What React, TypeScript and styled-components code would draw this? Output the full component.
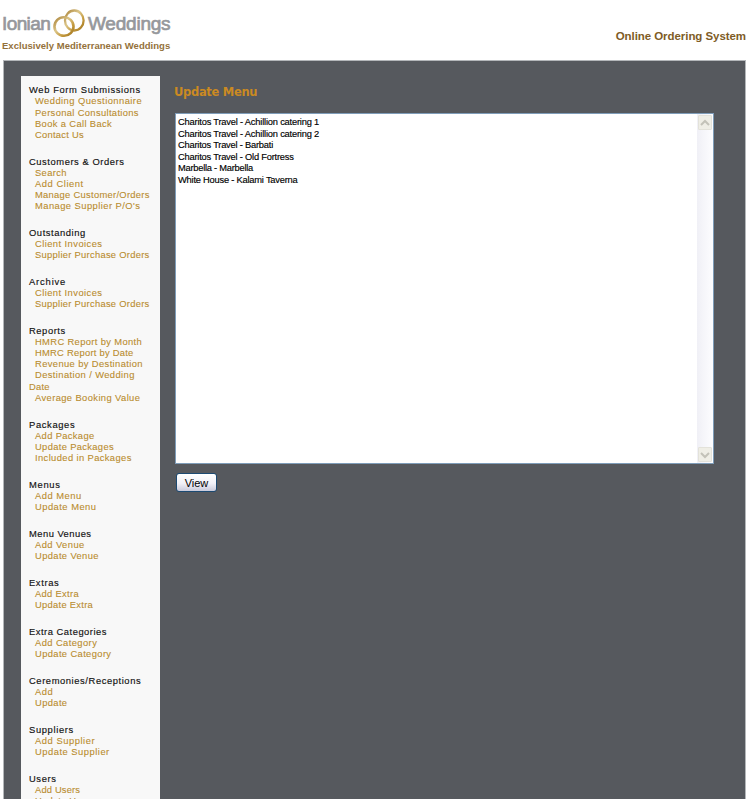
import React from "react";
import styled, { createGlobalStyle } from "styled-components";

const GlobalStyle = createGlobalStyle`
  * { box-sizing: border-box; }
  body { margin: 0; background: #fff; overflow: hidden; font-family: "Liberation Sans", Arial, sans-serif; }
`;

const Page = styled.div`
  width: 750px;
  height: 799px;
  padding: 0 4px 0 3px;
  overflow: hidden;
  display: flex;
  flex-direction: column;
`;

const Header = styled.header`
  height: 60px;
  flex: none;
  display: flex;
  justify-content: space-between;
`;

const Brand = styled.div`
  padding-top: 9px;
  white-space: nowrap;
`;

const Logo = styled.div`
  height: 30px;
  margin-left: -1px;
  display: flex;
  align-items: flex-start;
`;

const LogoWord = styled.span<{ $width: number; $track: number }>`
  width: ${(p) => p.$width}px;
  font-size: 19px;
  line-height: 30px;
  color: #96989c;
  -webkit-text-stroke: 0.7px #96989c;
  letter-spacing: ${(p) => p.$track}px;
`;

const Rings = styled.svg`
  width: 32px;
  height: 30px;
  margin: 0 3px 0 2px;
  flex: none;
`;

const Tagline = styled.div`
  margin-left: -1px;
  font-size: 9.5px;
  line-height: 13px;
  font-weight: bold;
  color: #94713a;
  letter-spacing: 0.03px;
`;

const SystemName = styled.div`
  padding-top: 29px;
  font-size: 11.5px;
  line-height: 14px;
  font-weight: bold;
  color: #7e5c26;
  letter-spacing: -0.06px;
  white-space: nowrap;
`;

const Body = styled.div`
  flex: 1;
  min-height: 0;
  display: flex;
  align-items: flex-start;
  padding: 15px 0 0 17px;
  background: #56595e;
  border: 1px solid #b4b7ba;
  border-bottom: 0;
`;

const Sidebar = styled.nav`
  width: 139px;
  height: 760px;
  flex: none;
  padding: 8.4px 0 0 8px;
  background: #f8f8f8;
`;

const Group = styled.section`
  margin-bottom: 15.8px;
  font-size: 9.4px;
  line-height: 11.1px;
  white-space: nowrap;
`;

const GroupTitle = styled.div<{ $track: number }>`
  color: #111;
  letter-spacing: ${(p) => p.$track}px;
  -webkit-text-stroke: 0.15px #111;
`;

const NavLink = styled.div<{ $track: number; $flush?: boolean }>`
  color: #b88c2e;
  -webkit-text-stroke: 0.1px #b88c2e;
  padding-left: ${(p) => (p.$flush ? 0 : 6)}px;
  letter-spacing: ${(p) => p.$track}px;
`;

const Content = styled.main`
  margin-left: 15px;
  padding-top: 8px;
`;

const Title = styled.h1`
  margin: 0 0 0 -1px;
  height: 29px;
  font-family: "DejaVu Sans", Verdana, sans-serif;
  font-size: 11.5px;
  line-height: 16px;
  font-weight: bold;
  color: #cb8a22;
  letter-spacing: -0.3px;
`;

const ListBox = styled.div`
  width: 539px;
  height: 351px;
  display: flex;
  justify-content: space-between;
  background: #fff;
  border: 1px solid #7f9db9;
`;

const Options = styled.div`
  padding: 3px 0 0 2px;
  white-space: nowrap;
`;

const Option = styled.div<{ $track: number }>`
  font-size: 9.3px;
  line-height: 11.6px;
  color: #000;
  -webkit-text-stroke: 0.15px #000;
  letter-spacing: ${(p) => p.$track}px;
`;

const Scrollbar = styled.div`
  width: 16px;
  display: flex;
  flex-direction: column;
  justify-content: space-between;
  padding: 1px;
  background: linear-gradient(90deg, #f0f0f6, #fdfdff);
`;

const ScrollButton = styled.div`
  width: 14px;
  height: 15px;
  display: flex;
  align-items: center;
  justify-content: center;
  background: #efeee6;
  border: 1px solid #e3e2da;
  border-radius: 1px;
`;

const ViewButton = styled.button`
  display: block;
  margin: 9px 0 0 1px;
  width: 41px;
  height: 19px;
  padding: 0;
  font-family: "Liberation Sans", Arial, sans-serif;
  font-size: 11px;
  line-height: 16px;
  color: #000;
  border: 1px solid #1c4a72;
  border-radius: 3px;
  background: linear-gradient(#fff 0%, #f1f1f8 55%, #c9cadb 100%);
`;

type Item = [text: string, track: number, flush?: boolean];

const groups: { title: Item; links: Item[] }[] = [
  { title: ["Web Form Submissions", 0.62], links: [["Wedding Questionnaire", 0.44], ["Personal Consultations", 0.34], ["Book a Call Back", 0.36], ["Contact Us", 0.25]] },
  { title: ["Customers & Orders", 0.56], links: [["Search", 0.37], ["Add Client", 0.55], ["Manage Customer/Orders", 0.29], ["Manage Supplier P/O's", 0.44]] },
  { title: ["Outstanding", 0.56], links: [["Client Invoices", 0.43], ["Supplier Purchase Orders", 0.28]] },
  { title: ["Archive", 0.84], links: [["Client Invoices", 0.43], ["Supplier Purchase Orders", 0.28]] },
  { title: ["Reports", 0.56], links: [["HMRC Report by Month", 0.35], ["HMRC Report by Date", 0.25], ["Revenue by Destination", 0.38], ["Destination / Wedding", 0.39], ["Date", 0.2, true], ["Average Booking Value", 0.39]] },
  { title: ["Packages", 0.64], links: [["Add Package", 0.34], ["Update Packages", 0.33], ["Included in Packages", 0.38]] },
  { title: ["Menus", 0.7], links: [["Add Menu", 0.5], ["Update Menu", 0.47]] },
  { title: ["Menu Venues", 0.47], links: [["Add Venue", 0.42], ["Update Venue", 0.37]] },
  { title: ["Extras", 0.62], links: [["Add Extra", 0.31], ["Update Extra", 0.28]] },
  { title: ["Extra Categories", 0.51], links: [["Add Category", 0.41], ["Update Category", 0.37]] },
  { title: ["Ceremonies/Receptions", 0.58], links: [["Add", 0.55], ["Update", 0.37]] },
  { title: ["Suppliers", 0.64], links: [["Add Supplier", 0.53], ["Update Supplier", 0.5]] },
  { title: ["Users", 0.6], links: [["Add Users", 0.15], ["Update Users", 0.2]] },
];

const options: Item[] = [
  ["Charitos Travel - Achillion catering 1", -0.19],
  ["Charitos Travel - Achillion catering 2", -0.19],
  ["Charitos Travel - Barbati", -0.21],
  ["Charitos Travel - Old Fortress", -0.21],
  ["Marbella - Marbella", -0.24],
  ["White House - Kalami Taverna", -0.21],
];

const Chevron = ({ d }: { d: string }) => (
  <svg width="10" height="8" viewBox="0 0 10 8" fill="none" stroke="#c3c2b8" strokeWidth="2">
    <path d={d} />
  </svg>
);

export default function App() {
  return (
    <>
      <GlobalStyle />
      <Page>
        <Header>
          <Brand>
            <Logo>
              <LogoWord $width={49} $track={-0.6}>Ionian</LogoWord>
              <Rings viewBox="0 0 32 30" fill="none">
                <defs>
                  <linearGradient id="gold" x1="0" y1="0" x2="1" y2="1">
                    <stop offset="0" stopColor="#a98238" />
                    <stop offset="0.4" stopColor="#dcc68a" />
                    <stop offset="0.7" stopColor="#c49a3e" />
                    <stop offset="1" stopColor="#a0741e" />
                  </linearGradient>
                </defs>
                <ellipse cx="21.3" cy="11.5" rx="9.3" ry="10" stroke="url(#gold)" strokeWidth="2.3" />
                <ellipse cx="11" cy="17.500" rx="9.500" ry="9.300" stroke="url(#gold)" strokeWidth="2.600" />
              </Rings>
              <LogoWord $width={84} $track={-0.22}>Weddings</LogoWord>
            </Logo>
            <Tagline>Exclusively Mediterranean Weddings</Tagline>
          </Brand>
          <SystemName>Online Ordering System</SystemName>
        </Header>
        <Body>
          <Sidebar>
            {groups.map(({ title, links }) => (
              <Group key={title[0]}>
                <GroupTitle $track={title[1]}>{title[0]}</GroupTitle>
                {links.map(([text, track, flush]) => (
                  <NavLink key={text} $track={track} $flush={flush}>{text}</NavLink>
                ))}
              </Group>
            ))}
          </Sidebar>
          <Content>
            <Title>Update Menu</Title>
            <ListBox>
              <Options>
                {options.map(([text, track]) => (
                  <Option key={text} $track={track}>{text}</Option>
                ))}
              </Options>
              <Scrollbar>
                <ScrollButton><Chevron d="M1 6l4-4 4 4" /></ScrollButton>
                <ScrollButton><Chevron d="M1 2l4 4 4-4" /></ScrollButton>
              </Scrollbar>
            </ListBox>
            <ViewButton>View</ViewButton>
          </Content>
        </Body>
      </Page>
    </>
  );
}
